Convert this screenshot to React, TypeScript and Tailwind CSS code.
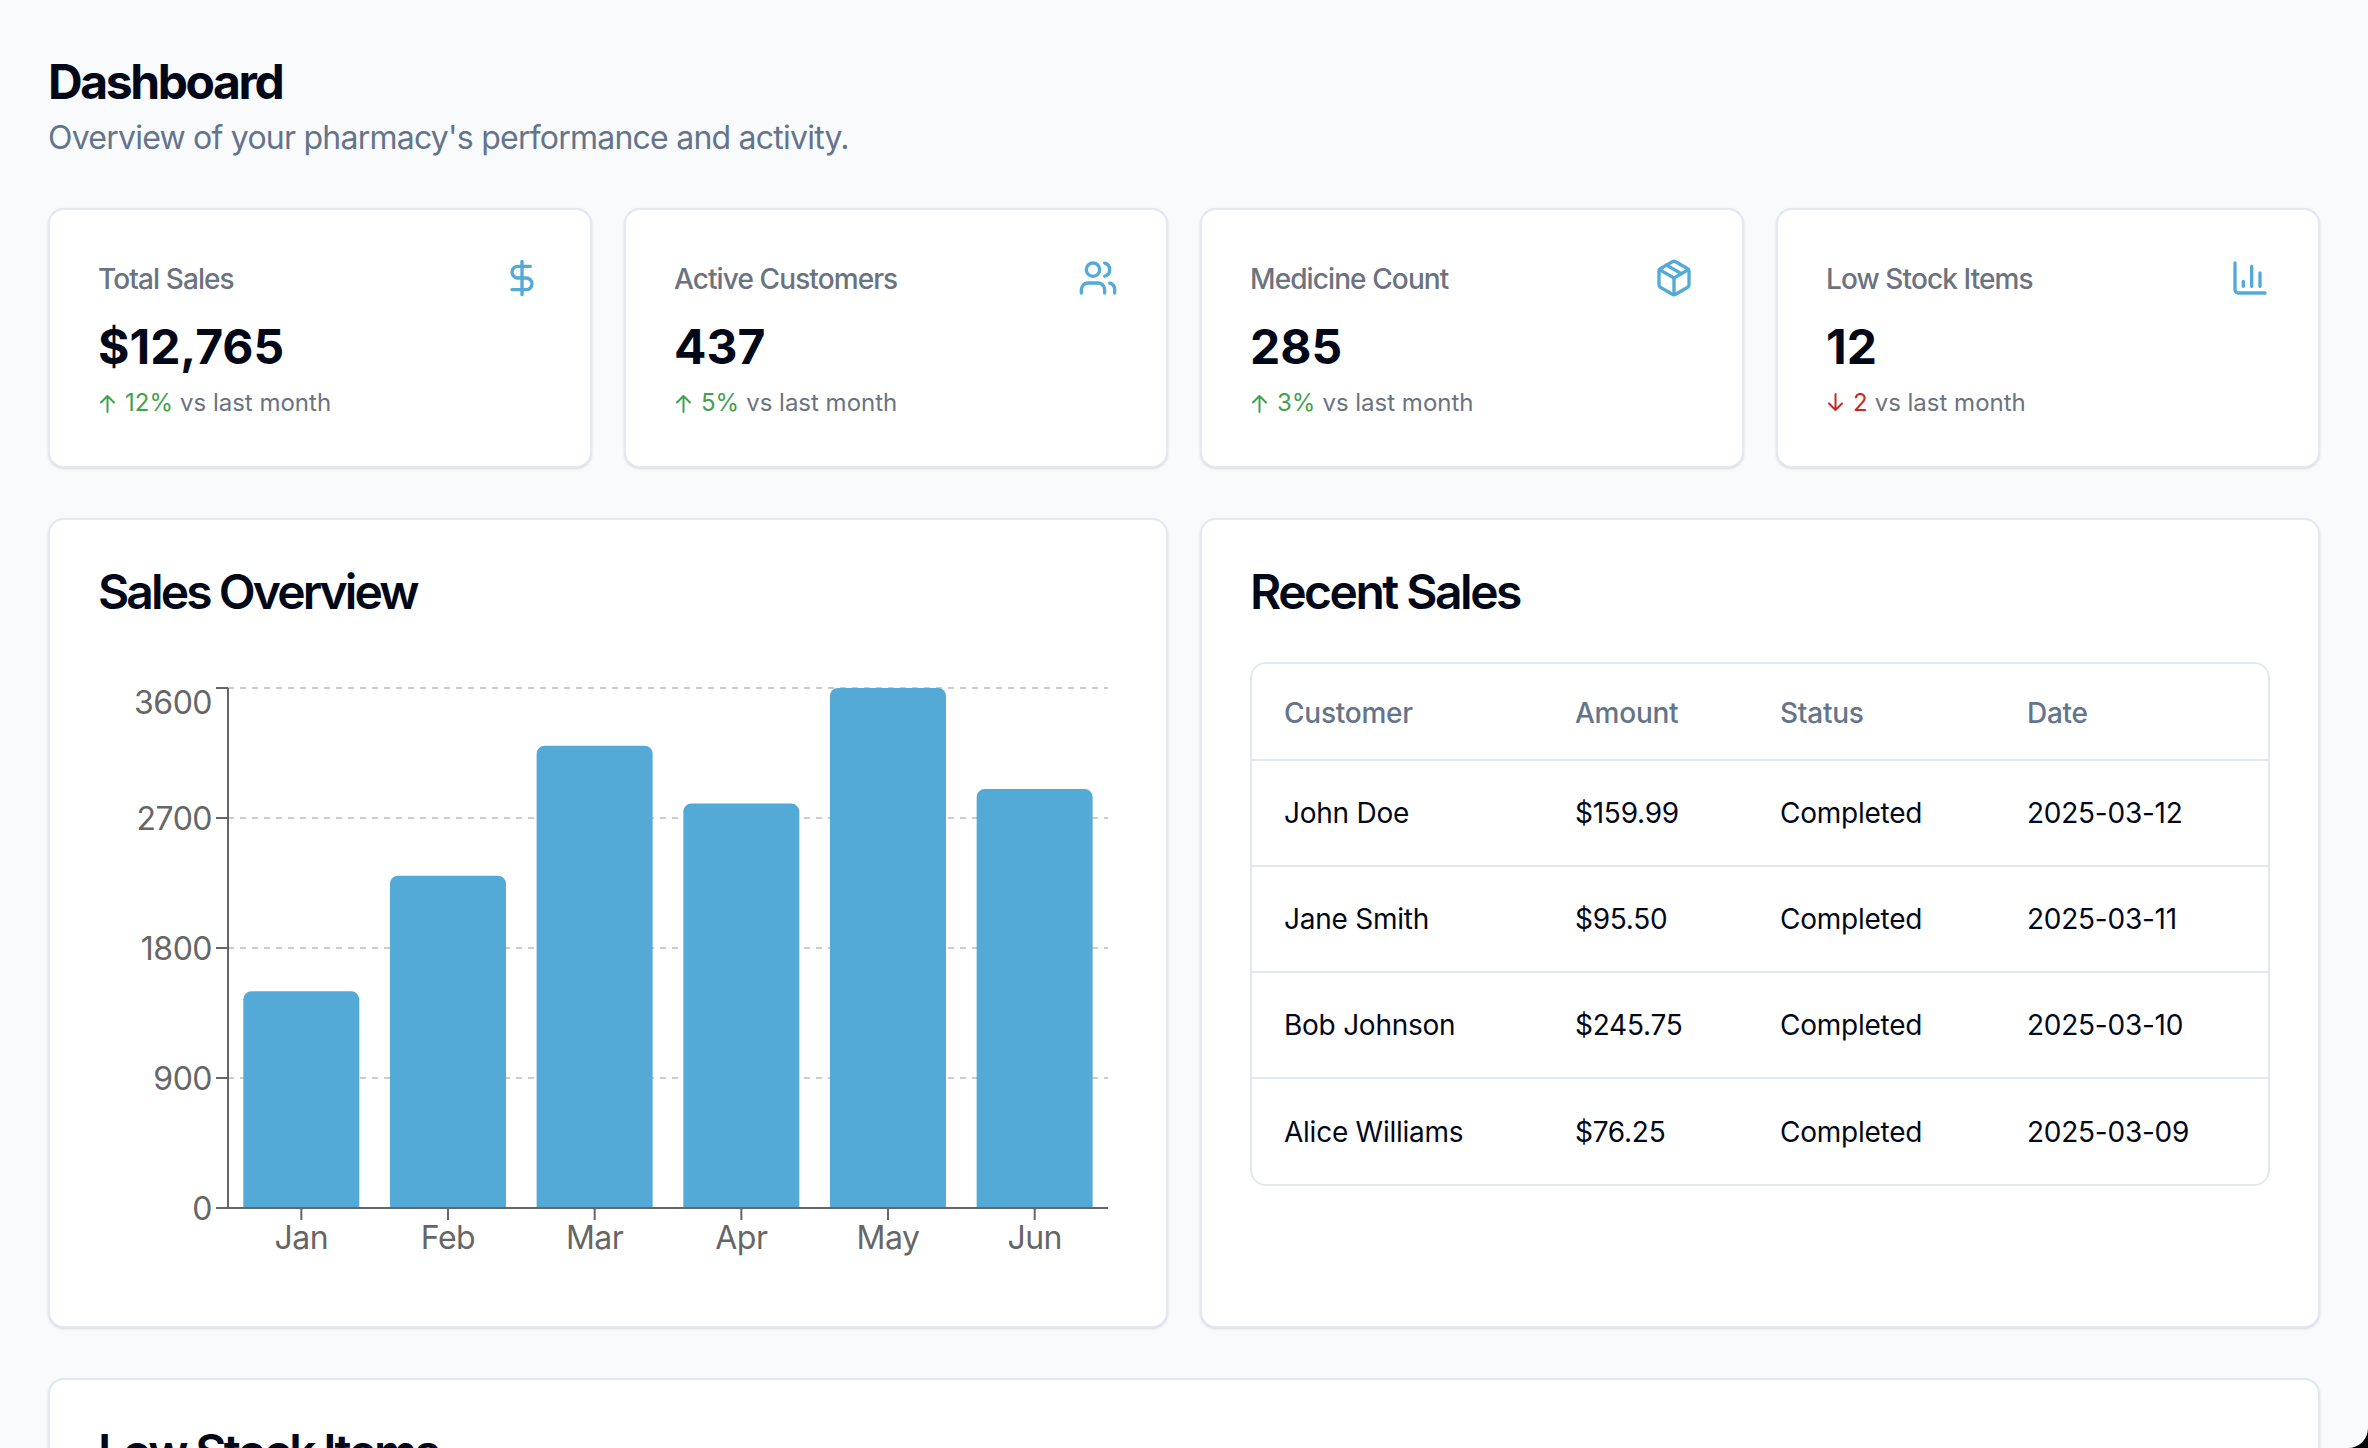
import React from 'react';
import { ChartColumn, DollarSign, Package, Users } from 'lucide-react';

const stats = [
  { label: 'Total Sales', value: '$12,765', delta: '12%', up: true, Icon: DollarSign },
  { label: 'Active Customers', value: '437', delta: '5%', up: true, Icon: Users },
  { label: 'Medicine Count', value: '285', delta: '3%', up: true, Icon: Package },
  { label: 'Low Stock Items', value: '12', delta: '2', up: false, Icon: ChartColumn },
];

const chartData = [
  ['Jan', 1500],
  ['Feb', 2300],
  ['Mar', 3200],
  ['Apr', 2800],
  ['May', 3600],
  ['Jun', 2900],
] as const;

const sales = [
  ['John Doe', '$159.99', 'Completed', '2025-03-12'],
  ['Jane Smith', '$95.50', 'Completed', '2025-03-11'],
  ['Bob Johnson', '$245.75', 'Completed', '2025-03-10'],
  ['Alice Williams', '$76.25', 'Completed', '2025-03-09'],
];

function Delta({ up }: { up: boolean }) {
  return (
    <svg
      width="24"
      height="24"
      viewBox="0 0 24 24"
      fill="none"
      stroke="currentColor"
      strokeWidth="2"
      strokeLinecap="round"
      strokeLinejoin="round"
      className={up ? 'mr-[3px] text-[#43a04f]' : 'mr-[3px] text-[#c62828]'}
    >
      {up ? <path d="M9.5 21V5M3 11.5L9.5 5L16 11.5" /> : <path d="M9.5 3V19M3 12.5L9.5 19L16 12.5" />}
    </svg>
  );
}

function Chart() {
  const x0 = 130;
  const y = (v: number) => 24 + 520 * (1 - v / 3600);
  const step = 146.67;
  return (
    <svg width="1020" height="612" className="mt-px block" style={{ fontFamily: 'Inter, sans-serif' }}>
      {[900, 1800, 2700, 3600].map((v) => (
        <line key={v} x1={x0} x2={1010} y1={y(v)} y2={y(v)} stroke="#ccc" strokeWidth="2" strokeDasharray="6 6" />
      ))}
      {chartData.map(([m, v], i) => {
        const l = x0 + i * step + 15.3;
        const t = y(v);
        const b = y(0);
        return (
          <path
            key={m}
            d={`M${l} ${b}V${t + 8}a8 8 0 0 1 8 -8H${l + 108}a8 8 0 0 1 8 8V${b}Z`}
            fill="#54aad6"
          />
        );
      })}
      <line x1={x0} x2={x0} y1={24} y2={544} stroke="#666" strokeWidth="2" />
      <line x1={x0} x2={1010} y1={544} y2={544} stroke="#666" strokeWidth="2" />
      {[0, 900, 1800, 2700, 3600].map((v) => (
        <g key={v}>
          <line x1={x0 - 12} x2={x0} y1={y(v)} y2={y(v)} stroke="#666" strokeWidth="2" />
          <text
            x={114}
            y={y(v) + (v === 3600 ? 14 : 0)}
            textAnchor="end"
            dominantBaseline="central"
            fontSize="32"
            letterSpacing="-0.5"
            fill="#666"
          >
            {v}
          </text>
        </g>
      ))}
      {chartData.map(([m], i) => {
        const cx = x0 + (i + 0.5) * step;
        return (
          <g key={m}>
            <line x1={cx} x2={cx} y1={544} y2={556} stroke="#666" strokeWidth="2" />
            <text x={cx} y={573} textAnchor="middle" dominantBaseline="central" fontSize="32" letterSpacing="-0.5" fill="#666">
              {m}
            </text>
          </g>
        );
      })}
    </svg>
  );
}

export default function App() {
  return (
    <div className="relative h-[1448px] overflow-hidden bg-[#f8fafc] p-12 font-[Inter,sans-serif] text-[#020817]">
      <h1 className="pt-0.5 text-[48px] leading-[64px] font-bold tracking-[-2.4px]">Dashboard</h1>
      <p className="mb-[46px] text-[32px] leading-[48px] tracking-[-0.77px] text-[#64748b]">
        Overview of your pharmacy's performance and activity.
      </p>

      <div className="mb-[50px] grid grid-cols-4 gap-8">
        {stats.map(({ label, value, delta, up, Icon }) => (
          <div key={label} className="rounded-2xl border-2 border-[#e2e8f0] bg-white p-12 shadow-sm">
            <div className="flex h-10 items-center justify-between">
              <span className="pt-0.5 text-[28px] font-medium tracking-[-0.9px] text-[#6b7280]">{label}</span>
              <Icon size={40} className="text-[#54aad6]" />
            </div>
            <div className="mt-[18px] text-[48px] leading-[62px] font-bold">{value}</div>
            <div className="mt-2 flex h-8 items-center pt-0.5 text-[24px] text-[#6b7280]">
              <Delta up={up} />
              <span className={up ? 'text-[#43a04f]' : 'text-[#c62828]'}>{delta}</span>
              <span className="ml-[7px]">vs last month</span>
            </div>
          </div>
        ))}
      </div>

      <div className="mb-[50px] grid h-[810px] grid-cols-2 gap-8">
        <div className="rounded-2xl border-2 border-[#e2e8f0] bg-white p-12 shadow-sm">
          <h2 className="mb-12 text-[48px] leading-[48px] font-semibold tracking-[-2.9px]">Sales Overview</h2>
          <Chart />
        </div>
        <div className="rounded-2xl border-2 border-[#e2e8f0] bg-white p-12 shadow-sm">
          <h2 className="mb-[46px] text-[48px] leading-[48px] font-semibold tracking-[-2.5px]">Recent Sales</h2>
          <div className="overflow-hidden rounded-2xl border-2 border-[#e2e8f0]">
            <table className="w-full table-fixed text-left text-[28px] tracking-[-0.25px]">
              <colgroup>
                <col className="w-[291px]" />
                <col className="w-[205px]" />
                <col className="w-[247px]" />
                <col />
              </colgroup>
              <thead>
                <tr className="h-[96px] border-b-2 border-[#e2e8f0]">
                  {['Customer', 'Amount', 'Status', 'Date'].map((h) => (
                    <th key={h} className="px-8 pt-0.5 font-medium text-[#64748b]">{h}</th>
                  ))}
                </tr>
              </thead>
              <tbody>
                {sales.map((row, i) => (
                  <tr key={row[0]} className={i < sales.length - 1 ? 'h-[106px] border-b-2 border-[#e2e8f0]' : 'h-[106px]'}>
                    {row.map((c) => (
                      <td key={c} className="px-8">{c}</td>
                    ))}
                  </tr>
                ))}
              </tbody>
            </table>
          </div>
        </div>
      </div>

      <div className="h-[400px] rounded-2xl border-2 border-[#e2e8f0] bg-white p-12 shadow-sm">
        <h2 className="text-[48px] leading-[48px] font-semibold tracking-[-2.7px]">Low Stock Items</h2>
      </div>

      <svg className="absolute right-0 bottom-0" width="20" height="20">
        <path d="M20 0V20H0A20 20 0 0 0 20 0Z" fill="#000" />
      </svg>
    </div>
  );
}
